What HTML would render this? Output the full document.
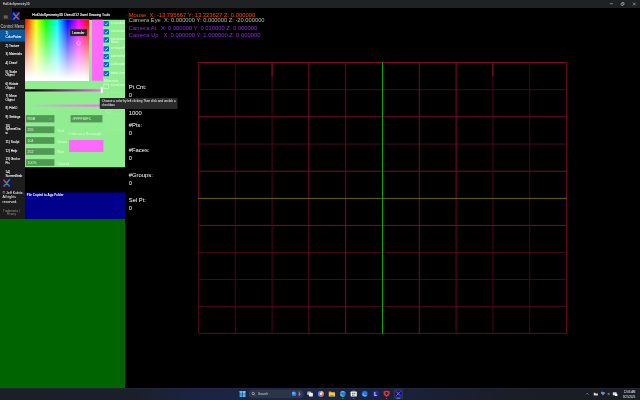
<!DOCTYPE html>
<html><head><meta charset="utf-8"><title>HotDdxSymmetry3D</title>
<style>
*{box-sizing:border-box;margin:0;padding:0}
html,body{width:640px;height:400px;overflow:hidden;background:#000;font-family:"Liberation Sans",sans-serif;color:#fff}
#r{position:relative;width:2560px;height:1600px;overflow:hidden;background:#000;transform:scale(.25);transform-origin:0 0}
#r div,#r span,#r svg{position:absolute}
.t{white-space:nowrap;line-height:1}
/* title bar */
#tb{left:0;top:0;width:2560px;height:32px;background:#202124}
#tb .t{left:11.2px;top:9.2px;font-size:13.2px;color:#f2f2f2}
/* nav */
#nav{left:0;top:80px;width:100px;height:796px;background:#1c1c1c}
#navtop{left:0;top:32px;width:48px;height:48px;background:#222}
.ni{left:0;width:100px;font-size:14px;line-height:14.8px;color:#fff;font-weight:normal;-webkit-text-stroke:0.28px #fff}
.ni span{left:22px;top:0;white-space:pre;transform:scaleX(.89);transform-origin:0 0}
/* panel */
#pan{left:100px;top:78.8px;width:400px;height:590px;background:#90ee90}
.fld{background:rgba(40,100,45,.62);border:1.8px solid rgba(255,255,255,.36);font-size:14px;color:rgba(255,255,255,.88)}
.lbl{font-size:14px;color:rgba(255,255,255,.7);white-space:nowrap}
.cb{width:22.4px;height:21.6px;background:#0a68cc;border-radius:2.4px}
.cbl{font-size:11.8px;line-height:11.2px;color:rgba(255,255,255,.78);white-space:nowrap;width:56.4px;overflow:hidden;letter-spacing:-0.2px}
/* stats */
.st{left:514.8px;font-size:23.6px;color:#fff;white-space:nowrap;line-height:1;transform:scaleX(.99);transform-origin:0 0}
.cam{left:514.8px;font-size:23.6px;white-space:pre;line-height:1;transform-origin:0 0;transform:scaleX(.975)}
#w{position:absolute;left:0;top:0;width:640px;height:400px;overflow:hidden;will-change:transform;transform:translateZ(0)}
</style></head><body><div id="w"><div id="r">

<!-- title bar -->
<div id="tb"><div class="t" style="transform:scaleX(.9);transform-origin:0 0">HotDdxSymmetry3D</div>
<svg style="left:2340px;top:0;width:220px;height:32px" viewBox="585 0 55 8"><g stroke="#dcdcdc" stroke-width=".5" fill="none"><path d="M609.9 3.75h2.9"/><rect x="621.1" y="3.3" width="2.1" height="2.1" rx=".4"/><path d="M621.9 3.3v-.3q0-.5 .5-.5h1.2q.5 0 .5 .5v1.3q0 .5-.5 .5h-.3"/><path d="M632.9 2.7l2.7 2.7m0-2.7l-2.7 2.7"/></g></svg>
</div>

<!-- left nav -->
<div id="nav"></div>
<div id="navtop"></div>
<svg style="left:12px;top:60px;width:22.4px;height:16px" viewBox="0 0 5.6 4"><rect x=".1" y=".1" width="5.4" height="3.8" fill="#2a2a2a" stroke="#444" stroke-width=".25"/><g stroke="#c4c4c4" stroke-width=".42"><path d="M1 1.05h3.6M1 2h3.6M1 2.95h3.6"/></g></svg>
<svg id="logo1" style="left:48px;top:48.4px;width:32.4px;height:34.8px" viewBox="0 0 8 8" preserveAspectRatio="none"><rect width="8" height="8" fill="#0a0ab8"/><path d="M1.6 1.5L6.4 6.5M6.6 1.2L1.6 6.6" stroke="#2cb01a" stroke-width="1.35" stroke-linecap="round"/><circle cx="4.2" cy="3.8" r="1.05" fill="#cc5a10"/><g fill="#ff1424"><circle cx="1.5" cy="1.35" r=".8"/><circle cx="6.8" cy=".8" r=".75"/><circle cx="1.5" cy="6.6" r=".8"/><circle cx="6.5" cy="6.5" r=".8"/></g></svg>
<div class="t" style="left:1.6px;top:98.4px;font-size:18.8px;color:#d4d4d4;transform:scaleX(.845);transform-origin:0 0">Control Menu</div>

<div style="left:0;top:118px;width:100px;height:48px;background:#0b5a9d"></div>
<div class="ni" style="top:124px"><span>1)
ColorPicker</span></div>
<div class="ni" style="top:174px"><span>2) Texture</span></div>
<div class="ni" style="top:208.4px"><span>3) Materials</span></div>
<div class="ni" style="top:243.6px"><span>4) Draw!</span></div>
<div class="ni" style="top:278px"><span>5) Scale
Object</span></div>
<div class="ni" style="top:327.6px"><span>6) Rotate
Object</span></div>
<div class="ni" style="top:376.4px"><span>7) Move
Object</span></div>
<div class="ni" style="top:424.8px"><span>8) FileIO</span></div>
<div class="ni" style="top:460px"><span>9) Settings</span></div>
<div class="ni" style="top:494.4px"><span>10)
SphereDra
w</span></div>
<div class="ni" style="top:558.4px"><span>11) Sculpt</span></div>
<div class="ni" style="top:594px"><span>12) Help</span></div>
<div class="ni" style="top:628px"><span>13) Grid or
Pic</span></div>
<div class="ni" style="top:678.8px"><span>14)
ScreenGrab</span></div>
<svg id="logo2" style="left:10px;top:715.4px;width:32.6px;height:35px" viewBox="0 0 8 8" preserveAspectRatio="none"><rect width="8" height="8" fill="#0a0ab8"/><path d="M1.6 1.5L6.4 6.5M6.6 1.2L1.6 6.6" stroke="#2cb01a" stroke-width="1.35" stroke-linecap="round"/><circle cx="4.2" cy="3.8" r="1.05" fill="#cc5a10"/><g fill="#ff1424"><circle cx="1.5" cy="1.35" r=".8"/><circle cx="6.8" cy=".8" r=".75"/><circle cx="1.5" cy="6.6" r=".8"/><circle cx="6.5" cy="6.5" r=".8"/></g></svg>
<div class="t" style="left:10px;top:760.4px;font-size:15px;line-height:18.6px;color:#fff;white-space:pre;transform:scaleX(.94);transform-origin:0 0">© Jeff Kubitz.
All rights
reserved.</div>
<div class="t" style="left:10.4px;top:834.8px;font-size:12.2px;line-height:14.4px;color:#9a9a9a;transform:scaleX(.93);transform-origin:0 0;white-space:pre;text-align:center;width:76px">Trademarks |
Privacy</div>

<!-- header strip -->
<div class="t" style="left:129.2px;top:51.6px;font-size:13.6px;color:#fff;-webkit-text-stroke:0.4px #fff;transform:scaleX(1.0);transform-origin:0 0;top:53.2px">HotDdxSymmetry3D DirectX12 Xaml Drawing Tools</div>

<!-- colour panel -->
<div id="pan"></div>
<div id="spec" style="left:100px;top:78.8px;width:256px;height:243.2px;background:linear-gradient(to bottom,rgba(255,255,255,0),#fff 97%),linear-gradient(to right,#f00,#ff0 16.6%,#0f0 33.3%,#0ff 50%,#00f 66.6%,#f0f 83.3%,#f00)"></div>
<div style="left:100px;top:316px;width:256px;height:8px;background:#fff"></div>
<div style="left:368.4px;top:78.8px;width:43.2px;height:244.4px;background:#ff68fc"></div>

<div class="cb" style="left:413.6px;top:83.8px"></div><svg style="left:413.6px;top:83.8px;width:22.4px;height:21.6px" viewBox="0 0 5.6 5.4"><path d="M1.2 2.8l1.15 1.15 2.1-2.5" stroke="#fff" stroke-width=".7" fill="none"/></svg>
<div class="cbl" style="left:443.6px;top:85.6px;white-space:pre">isColorActive</div>
<div class="cb" style="left:413.6px;top:116.6px"></div><svg style="left:413.6px;top:116.6px;width:22.4px;height:21.6px" viewBox="0 0 5.6 5.4"><path d="M1.2 2.8l1.15 1.15 2.1-2.5" stroke="#fff" stroke-width=".7" fill="none"/></svg>
<div class="cbl" style="left:443.6px;top:118.4px;white-space:pre">isLineColorActi</div>
<div class="cb" style="left:413.6px;top:148.6px"></div><svg style="left:413.6px;top:148.6px;width:22.4px;height:21.6px" viewBox="0 0 5.6 5.4"><path d="M1.2 2.8l1.15 1.15 2.1-2.5" stroke="#fff" stroke-width=".7" fill="none"/></svg>
<div class="cbl" style="left:443.6px;top:149.8px;white-space:pre">isLineDrawnCol
Active</div>
<div class="cb" style="left:413.6px;top:184.8px"></div><svg style="left:413.6px;top:184.8px;width:22.4px;height:21.6px" viewBox="0 0 5.6 5.4"><path d="M1.2 2.8l1.15 1.15 2.1-2.5" stroke="#fff" stroke-width=".7" fill="none"/></svg>
<div class="cbl" style="left:443.6px;top:186.6px;white-space:pre">isPolygonFillAc</div>
<div class="cb" style="left:413.6px;top:215.6px"></div><svg style="left:413.6px;top:215.6px;width:22.4px;height:21.6px" viewBox="0 0 5.6 5.4"><path d="M1.2 2.8l1.15 1.15 2.1-2.5" stroke="#fff" stroke-width=".7" fill="none"/></svg>
<div class="cbl" style="left:443.6px;top:217.4px;white-space:pre">isAmbientActive</div>
<div class="cb" style="left:413.6px;top:247.6px"></div><svg style="left:413.6px;top:247.6px;width:22.4px;height:21.6px" viewBox="0 0 5.6 5.4"><path d="M1.2 2.8l1.15 1.15 2.1-2.5" stroke="#fff" stroke-width=".7" fill="none"/></svg>
<div class="cbl" style="left:443.6px;top:249.4px;white-space:pre">isDiffuseActive</div>
<div class="cb" style="left:413.6px;top:283.8px"></div><svg style="left:413.6px;top:283.8px;width:22.4px;height:21.6px" viewBox="0 0 5.6 5.4"><path d="M1.2 2.8l1.15 1.15 2.1-2.5" stroke="#fff" stroke-width=".7" fill="none"/></svg>
<div class="cbl" style="left:443.6px;top:285.6px;white-space:pre">Apply Overlay</div>
<div class="lbl" style="left:416.4px;top:312.4px;font-size:15.6px;color:rgba(255,255,255,.8);transform:scaleX(.9);transform-origin:0 0">Materials</div>
<div style="left:414px;top:335.2px;width:21.2px;height:20px;border:2px solid rgba(255,255,255,.9);border-radius:2px"></div>
<div class="cbl" style="left:443.6px;top:334.4px">isLineDrawn</div>
<div style="left:426.4px;top:435.6px;width:16.8px;height:15.6px;border:1.8px solid rgba(255,255,255,.7);border-radius:1.6px"></div>
<div style="left:423.2px;top:454px;width:67.2px;height:67.2px;border:1.4px solid rgba(255,255,255,.22);background:rgba(255,255,255,.04)"></div>
<div style="left:430px;top:368px;width:56px;height:56px;border:1.4px solid rgba(255,255,255,.25)"></div>
<div style="left:100px;top:356.8px;width:308px;height:9.6px;background:linear-gradient(to right,#000,#160915 10%,#ff68fc)"></div>
<div style="left:403.2px;top:348.8px;width:8px;height:23.2px;background:#fff;border-radius:2.4px"></div>
<div style="left:108px;top:417.6px;width:304px;height:9.6px;background:linear-gradient(to right,rgba(255,104,252,0),#ff68fc)"></div>
<div class="fld" style="left:103.2px;top:460px;width:114.4px;height:29.6px"><div class="t" style="left:6px;top:6.2px">RGB</div><svg style="left:90.4px;top:10.4px;width:12px;height:8px" viewBox="0 0 3 2"><path d="M.4 .4l1.1 1.1 1.1-1.1" stroke="#cfc" stroke-width=".35" fill="none"/></svg></div>
<div class="fld" style="left:281.6px;top:460px;width:128px;height:29.6px"><div class="t" style="left:6px;top:6.2px">#FFFF68FC</div></div>
<div class="fld" style="left:103.2px;top:504.8px;width:114.4px;height:28.4px"><div class="t" style="left:6px;top:6.2px">255</div></div>
<div class="fld" style="left:103.2px;top:548px;width:114.4px;height:28.4px"><div class="t" style="left:6px;top:6.2px">104</div></div>
<div class="fld" style="left:103.2px;top:591.6px;width:114.4px;height:28.4px"><div class="t" style="left:6px;top:6.2px">252</div></div>
<div class="fld" style="left:103.2px;top:636px;width:114.4px;height:28.4px"><div class="t" style="left:6px;top:6.2px">100%</div></div>
<div class="lbl" style="left:229.2px;top:513.2px">Red</div><div class="lbl" style="left:229.2px;top:557.2px">Green</div><div class="lbl" style="left:229.2px;top:600.4px">Blue</div><div class="lbl" style="left:229.2px;top:644.8px">Opacity</div>
<div class="lbl" style="left:274.4px;top:526.4px;font-size:14px">Color on a Rectangle</div>
<div style="left:276px;top:559.6px;width:138px;height:48.4px;background:#ff68fc"></div>
<svg style="left:302.4px;top:161.2px;width:24px;height:24px" viewBox="0 0 6 6"><circle cx="3" cy="3" r="1.75" fill="none" stroke="rgba(255,235,255,.92)" stroke-width=".65"/></svg>
<div style="left:280.4px;top:115.6px;width:67.2px;height:28.4px;background:#222622;border:1px solid #3a3e3a;border-radius:3.2px"></div><div class="t" style="left:288.8px;top:124px;font-size:12.6px;color:#fff;-webkit-text-stroke:0.32px #fff;transform:scaleX(.93);transform-origin:0 0">Lavender</div>
<div style="left:399.2px;top:392px;width:310.4px;height:44px;background:#2b2b2b;border-radius:3.2px"></div><div class="t" style="left:407.2px;top:396px;font-size:12.28px;line-height:16.8px;color:#fff;white-space:pre">Choose a color by left clicking Then click and unclick a
checkbox</div>
<!-- stats -->
<div class="st" style="top:336.4px">Pt Cnt:</div>
<div class="st" style="top:370.4px">0</div>
<div class="st" style="top:441.6px">1000</div>
<div class="st" style="top:488.8px">#Pts:</div>
<div class="st" style="top:520.4px">0</div>
<div class="st" style="top:588.8px">#Faces:</div>
<div class="st" style="top:619.6px">0</div>
<div class="st" style="top:688.8px">#Groups:</div>
<div class="st" style="top:720.8px">0</div>
<div class="st" style="top:789.6px">Sel Pt:</div>
<div class="st" style="top:820.8px">0</div>
<!-- camera -->
<div style="left:513px;top:43px;width:1.4px;height:49px;background:rgba(130,118,24,.7)"></div><div style="left:501px;top:68px;width:52px;height:1.3px;background:rgba(0,128,118,.6)"></div><div style="left:501px;top:60px;width:10px;height:1.4px;background:rgba(190,40,200,.7);transform:rotate(35deg)"></div>
<div class="cam" style="top:70px;color:#a2c6a2">Camera Eye  X: 0.000000 Y: 0.000000 Z: -20.000000</div>
<div class="cam" style="top:49.2px;color:#ff4a10;transform:scaleX(.992)">Mouse  X: -13.795667 Y: 13.323627 Z: 0.000000</div>
<div class="cam" style="top:100px;color:#902ce2;transform:scaleX(.983)">Camera At   X: 0.000000 Y: 0.010000 Z: 0.000000</div>
<div class="cam" style="top:129.2px;color:#902ce2;transform:scaleX(.99)">Camera Up   X: 0.000000 Y: 1.000000 Z: 0.000000</div>
<!-- grid -->
<svg style="left:0;top:0;width:2560px;height:1600px" viewBox="0 0 640 400">
<rect x="198.00" y="62.00" width="369.00" height="1" fill="#7e0c28"/><rect x="198.00" y="89.18" width="369.00" height="1" fill="#4a0818"/><rect x="198.00" y="116.36" width="369.00" height="1" fill="#7e0c28"/><rect x="198.00" y="143.54" width="369.00" height="1" fill="#4a0818"/><rect x="198.00" y="170.72" width="369.00" height="1" fill="#7e0c28"/><rect x="198.00" y="224.90" width="369.00" height="1" fill="#7e0c28"/><rect x="198.00" y="251.90" width="369.00" height="1" fill="#4a0818"/><rect x="198.00" y="278.90" width="369.00" height="1" fill="#4a0818"/><rect x="198.00" y="305.90" width="369.00" height="1" fill="#4a0818"/><rect x="198.00" y="332.90" width="369.00" height="1" fill="#640a20"/><rect x="198.00" y="62.00" width="1" height="136.40" fill="#640a20"/><rect x="198.00" y="198.40" width="1" height="135.50" fill="#4a0818"/><rect x="234.80" y="62.00" width="1" height="136.40" fill="#4a0818"/><rect x="234.80" y="198.40" width="1" height="135.50" fill="#4a0818"/><rect x="271.60" y="62.00" width="1" height="136.40" fill="#4a0818"/><rect x="271.60" y="198.40" width="1" height="135.50" fill="#4a0818"/><rect x="308.40" y="62.00" width="1" height="136.40" fill="#7e0c28"/><rect x="308.40" y="198.40" width="1" height="135.50" fill="#640a20"/><rect x="345.20" y="62.00" width="1" height="136.40" fill="#640a20"/><rect x="345.20" y="198.40" width="1" height="135.50" fill="#7e0c28"/><rect x="418.80" y="62.00" width="1" height="136.40" fill="#7e0c28"/><rect x="418.80" y="198.40" width="1" height="135.50" fill="#7e0c28"/><rect x="455.60" y="62.00" width="1" height="136.40" fill="#7e0c28"/><rect x="455.60" y="198.40" width="1" height="135.50" fill="#640a20"/><rect x="492.40" y="62.00" width="1" height="136.40" fill="#4a0818"/><rect x="492.40" y="198.40" width="1" height="135.50" fill="#4a0818"/><rect x="529.20" y="62.00" width="1" height="136.40" fill="#4a0818"/><rect x="529.20" y="198.40" width="1" height="135.50" fill="#4a0818"/><rect x="566.00" y="62.00" width="1" height="136.40" fill="#640a20"/><rect x="566.00" y="198.40" width="1" height="135.50" fill="#640a20"/><rect x="271.60" y="62.00" width="1" height="14.00" fill="#8c1030"/><rect x="492.40" y="62.00" width="1" height="14.00" fill="#8c1030"/><rect x="198.00" y="197.90" width="369.00" height="1" fill="#686208"/><rect x="382.00" y="62.00" width="1" height="271.90" fill="#12a212"/>
</svg>
<!-- bottom blocks -->
<div style="left:99.6px;top:770.4px;width:400.4px;height:106px;background:#00008b"></div>
<div class="t" style="left:107.2px;top:775.2px;font-size:12.12px;font-weight:bold;color:#fff">File Copied to App Folder</div>
<div style="left:0;top:875.6px;width:500px;height:678px;background:#006400"></div>

<!-- taskbar -->
<div id="task" style="left:0;top:1552px;width:2560px;height:48px;background:#1b2231"></div>
<svg style="left:0;top:1552px;width:2560px;height:48px" viewBox="0 388 640 12">
<defs><linearGradient id="tg" x1="0" x2="1"><stop offset="0" stop-color="#1b1f28"/><stop offset=".2" stop-color="#1b1f2a"/><stop offset=".3" stop-color="#1c2342"/><stop offset=".5" stop-color="#1d2444"/><stop offset=".66" stop-color="#1a2036"/><stop offset=".8" stop-color="#1b1d27"/><stop offset="1" stop-color="#1b1d24"/></linearGradient></defs><rect x="0" y="388" width="640" height="12" fill="url(#tg)"/><rect x="0" y="388" width="640" height=".3" fill="#3a3f4c"/>
<g fill="#4cc0fa"><rect x="239.6" y="391" width="2.75" height="2.8" rx=".2"/><rect x="242.75" y="391" width="2.75" height="2.8" rx=".2" fill="#62ccff"/><rect x="239.6" y="394.2" width="2.75" height="2.8" rx=".2" fill="#38a8f0"/><rect x="242.75" y="394.2" width="2.75" height="2.8" rx=".2"/></g>
<rect x="249.1" y="390.1" width="54.5" height="7.7" rx="3.85" fill="#2c3448" stroke="#3e465a" stroke-width=".3"/>
<circle cx="253.2" cy="393.5" r="1.15" fill="none" stroke="#f0f0f0" stroke-width=".5"/><path d="M254 394.4l1 1" stroke="#f0f0f0" stroke-width=".5"/>
<text x="258.1" y="395" font-family="Liberation Sans,sans-serif" font-size="3.2" fill="#d4d6da">Search</text>
<circle cx="294" cy="393.9" r="2.3" fill="#2b84e6"/><circle cx="293.5" cy="393.2" r="1.1" fill="#6fc0ff"/><path d="M298.2 394.4l1.4-2.4.6 1.6 1.2.2-1.6 1.6-.2 1.2z" fill="#8a70d8"/><circle cx="299" cy="392" r=".5" fill="#f0c040"/>
<rect x="307.2" y="391.4" width="3.9" height="3.6" rx=".4" fill="#a8acb4"/><rect x="308.9" y="392.8" width="4" height="3.6" rx=".4" fill="#eceef2"/>
<circle cx="320.9" cy="393.8" r="2.9" fill="#e85aa8"/><path d="M318 393.8a2.9 2.9 0 0 1 2.9-2.9v5.8a2.9 2.9 0 0 1-2.9-2.9z" fill="#3a8cf0"/><path d="M320.9 390.9a2.9 2.9 0 0 1 2.9 2.9h-2.9z" fill="#f0b030"/><path d="M323.8 393.8a2.9 2.9 0 0 1-2.9 2.9v-2.9z" fill="#f06a3a"/><circle cx="320.9" cy="393.8" r="1.2" fill="#f4f0ff"/>
<path d="M328.8 391.6h2.2l.8.8h3.2v1.2h-6.2z" fill="#e8a010"/><rect x="328.8" y="392.4" width="6.2" height="4.1" rx=".5" fill="#fbc92e"/><rect x="330.4" y="395.2" width="3" height="1.3" fill="#3a8ae0"/>
<circle cx="342.8" cy="393.8" r="2.9" fill="#1b74d2"/><path d="M340 394.6a2.9 2.9 0 0 0 5.2 1a2.4 2.4 0 0 1-3.4-1.9z" fill="#38d28a"/><path d="M340.2 392.6a2.9 2.9 0 0 1 5.4.6c-.6-1-2.2-1.4-3.2-.6z" fill="#58c8f4"/><circle cx="342.8" cy="398.3" r=".5" fill="#9a9ea8"/>
<path d="M352.4 391.6v-.6h2.6v.6" stroke="#dcdcdc" stroke-width=".4" fill="none"/><rect x="350.6" y="391.5" width="6.2" height="5.1" rx=".7" fill="#f4f4f6"/><rect x="352.1" y="392.7" width="1.4" height="1.4" fill="#e84a3a"/><rect x="353.9" y="392.7" width="1.4" height="1.4" fill="#3ab04a"/><rect x="352.1" y="394.5" width="1.4" height="1.4" fill="#2a8af0"/><rect x="353.9" y="394.5" width="1.4" height="1.4" fill="#f0b820"/><circle cx="353.7" cy="398.3" r=".5" fill="#9a9ea8"/>
<circle cx="364.7" cy="393.8" r="3" fill="#1668cc"/><path d="M362.2 394.8a2.7 2.7 0 0 0 5 .2a3 3 0 0 1-3.6-2.6z" fill="#4cb4fa"/><circle cx="365.4" cy="392.8" r="1.1" fill="#2a8cf0"/>
<rect x="372.6" y="390.7" width="6" height="5.9" rx=".4" fill="#1b2da2"/><text x="374.3" y="395.6" font-family="Liberation Sans,sans-serif" font-weight="bold" font-size="4.6" fill="#fff">L</text>
<path d="M383.6 391.2l3-.6 3 .6v2.4c0 1.8-1.4 2.7-3 3.3c-1.6-.6-3-1.5-3-3.3z" fill="#e42a3c"/><path d="M385.4 393.2a1.2 1.2 0 0 1 2.4 0c0 .8-1.2 1.8-1.2 1.8s-1.2-1-1.2-1.8z" fill="#1b2231"/><circle cx="386.6" cy="398.3" r=".5" fill="#9a9ea8"/>
<rect x="393.7" y="389.1" width="9.3" height="10" rx=".9" fill="#2b3347"/><rect x="395.2" y="390.7" width="6.2" height="5.9" fill="#0a0ab8"/><path d="M396.4 391.8l3.8 3.8m0-3.8l-3.8 3.8" stroke="#2cb01a" stroke-width="1"/><circle cx="398.3" cy="393.6" r=".8" fill="#cc5a10"/><g fill="#ff1424"><circle cx="396.3" cy="391.7" r=".6"/><circle cx="400.4" cy="391.5" r=".6"/><circle cx="396.3" cy="395.7" r=".6"/><circle cx="400.2" cy="395.6" r=".6"/></g><rect x="396.4" y="397.8" width="3.9" height=".7" rx=".35" fill="#62b8fa"/>
<path d="M586 394.5l1.25-1.25 1.25 1.25" stroke="#e8e8e8" stroke-width=".42" fill="none"/>
<path d="M593.8 395.6v-2.8h1.3l.6 .7h2.2v2.1z" fill="#d4d4d4"/>
<path d="M601 393a2.8 2.8 0 0 1 4 0l-2 2.6z" fill="#8a9098"/><path d="M601 393a2.8 2.8 0 0 1 4 0l-.9 1.1a1.6 1.6 0 0 0-2.2 0z" fill="#3a9cf0"/><circle cx="601.9" cy="392.3" r=".75" fill="#3aa4f8"/>
<path d="M607.6 393.3h.8l1-.9v3l-1-.9h-.8z" fill="#868b94"/>
<rect x="612.8" y="392.3" width="3.8" height="2.9" rx=".3" fill="#dcdcdc"/><rect x="614.8" y="393.8" width="2.6" height="2.2" rx=".3" fill="#f6f6f6"/>
<text x="635.3" y="393.4" text-anchor="end" font-family="Liberation Sans,sans-serif" font-size="2.75" fill="#f0f0f0">12:06 AM</text><text x="635.3" y="397.5" text-anchor="end" font-family="Liberation Sans,sans-serif" font-size="2.75" fill="#f0f0f0">8/25/2025</text>
</svg>

</div></div></body></html>
